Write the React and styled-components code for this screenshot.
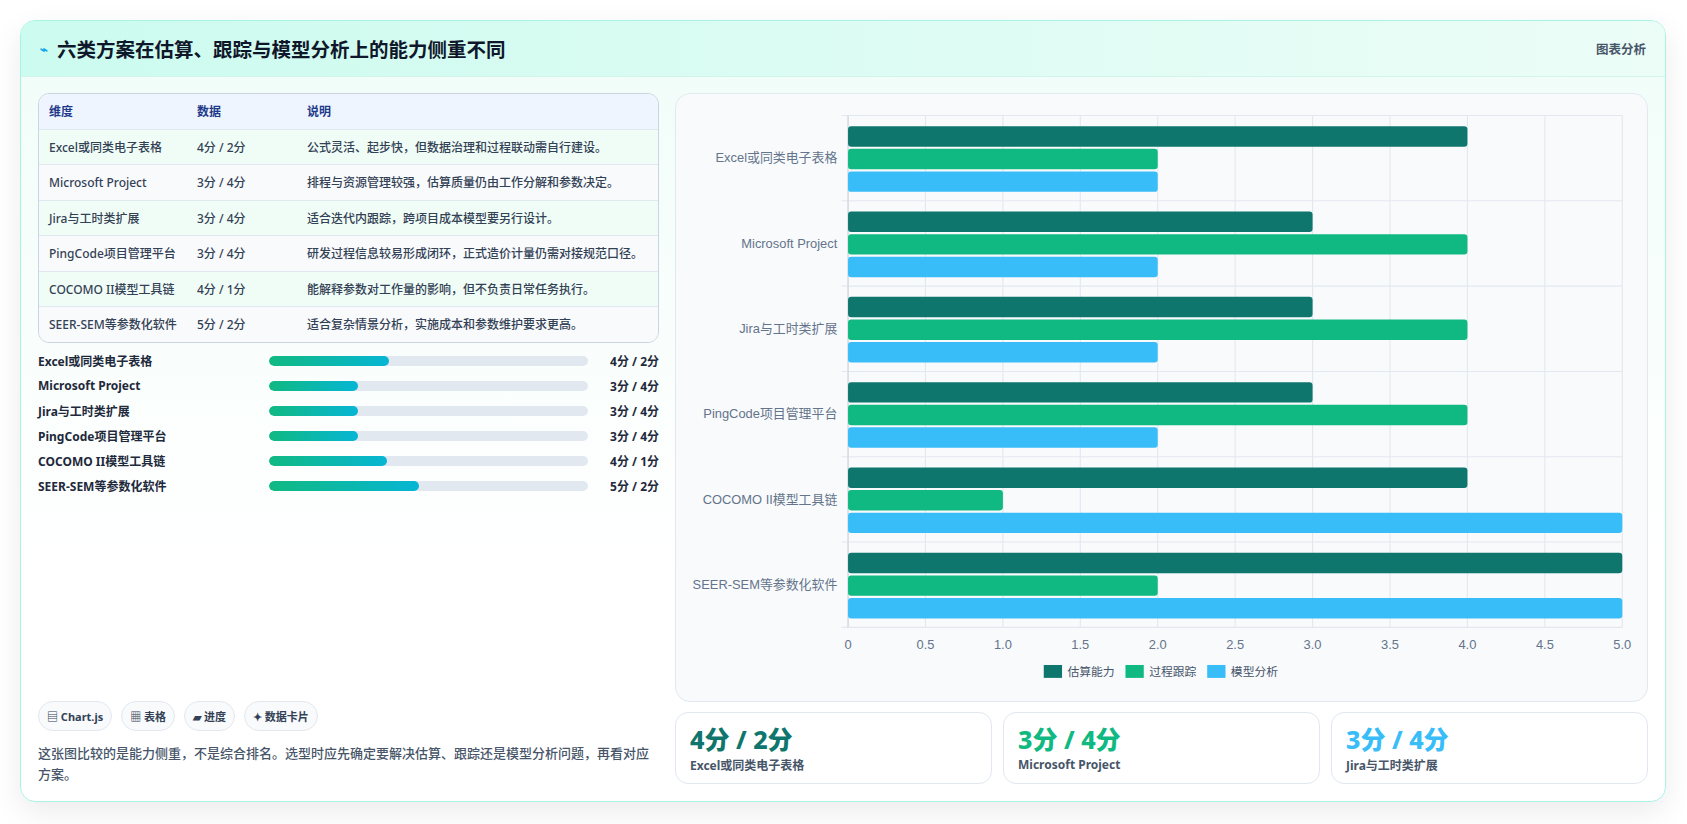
import React from "react";
import styled, { createGlobalStyle } from "styled-components";

const G = createGlobalStyle`
  body{margin:0;background:#fff;font-family:"Noto Sans","Noto Sans CJK SC",sans-serif;color:#0f172a;}
`;
const Page = styled.div`padding:20px 21px 22px 20px;`;
const Card = styled.div`
  height:782px;box-sizing:border-box;border:1px solid #a7f3e4;border-radius:15px;
  background:linear-gradient(180deg,#f0fdf8 0%,#ffffff 70%);box-shadow:0 10px 30px rgba(0,0,0,.08);
  display:flex;flex-direction:column;overflow:hidden;
`;
const Header = styled.div`
  height:55px;flex:none;display:flex;align-items:center;justify-content:space-between;padding:0 19px;
  background:linear-gradient(90deg,#ccfbef,#ecfdf7);border-bottom:1px solid #d1f5ea;
`;
const Title = styled.h1`margin:0;font-size:19.5px;font-weight:700;display:flex;gap:9px;align-items:center;`;
const Tag = styled.span`font-size:12.5px;color:#475569;font-weight:600;`;
const Body = styled.div`flex:1;display:grid;grid-template-columns:621px 1fr;gap:16px;padding:16px 17px 16px 17px;`;
const Left = styled.div`display:flex;flex-direction:column;`;
const Table = styled.div`border:1px solid #cbd5e1;border-radius:11px;overflow:hidden;`;
const Row = styled.div`
  display:grid;grid-template-columns:148px 110px 1fr;height:34.5px;align-items:center;padding-left:10px;
  font-size:12px;color:${p=>p.$h?"#1e3a8a":"#334155"};font-weight:${p=>p.$h?600:500};
  background:${p=>p.$h?"#eef5ff":p.$odd?"#f0fdf7":"#f8fafc"};border-top:${p=>p.$h?"none":"1px solid #e2e8f0"};
`;
const Bars = styled.div`display:flex;flex-direction:column;gap:7px;margin-top:9px;`;
const BarRow = styled.div`display:grid;grid-template-columns:231px 319px 1fr;align-items:center;height:18px;font-size:12px;font-weight:700;color:#1e293b;`;
const Track = styled.div`height:10px;border-radius:5px;background:#e2e8f0;overflow:hidden;`;
const Fill = styled.div`height:100%;border-radius:5px;background:linear-gradient(90deg,#10b981,#06b6d4);`;
const Val = styled.span`text-align:right;`;
const Spacer = styled.div`flex:1;`;
const Chips = styled.div`display:flex;gap:9px;`;
const Chip = styled.span`font-size:11px;font-weight:700;color:#334155;border:1px solid #e2e8f0;background:#f8fafc;border-radius:15px;padding:6px 8px;`;
const Note = styled.p`margin:12px 0 0;font-size:13px;line-height:21px;color:#475569;font-weight:500;`;
const Right = styled.div`display:flex;flex-direction:column;gap:10px;`;
const ChartBox = styled.div`height:607px;border:1px solid #e2e8f0;border-radius:15px;background:#f8fafc;overflow:hidden;`;
const Stats = styled.div`display:grid;grid-template-columns:repeat(3,1fr);gap:11px;`;
const Stat = styled.div`height:72px;box-sizing:border-box;border:1px solid #e2e8f0;border-radius:13px;background:#fff;padding:9px 14px;`;
const Big = styled.div`font-size:25px;font-weight:800;color:${p=>p.$c};line-height:34px;`;
const Small = styled.div`font-size:12px;font-weight:700;color:#475569;`;

const data=[
 ["Excel或同类电子表格","4分 / 2分","公式灵活、起步快，但数据治理和过程联动需自行建设。",[4,2,2],37.5],
 ["Microsoft Project","3分 / 4分","排程与资源管理较强，估算质量仍由工作分解和参数决定。",[3,4,2],28],
 ["Jira与工时类扩展","3分 / 4分","适合迭代内跟踪，跨项目成本模型要另行设计。",[3,4,2],28],
 ["PingCode项目管理平台","3分 / 4分","研发过程信息较易形成闭环，正式造价计量仍需对接规范口径。",[3,4,2],28],
 ["COCOMO II模型工具链","4分 / 1分","能解释参数对工作量的影响，但不负责日常任务执行。",[4,1,5],37],
 ["SEER-SEM等参数化软件","5分 / 2分","适合复杂情景分析，实施成本和参数维护要求更高。",[5,2,5],47],
];
const cols=["#0f766e","#10b981","#38bdf8"];

function Chart(){
  const x0=160,x1=880,y0=20,y1=496,gh=(y1-y0)/6;
  const sx=v=>x0+(v/5)*(x1-x0);
  return (
    <svg width="100%" viewBox="0 0 903 564" style={{display:"block"}}>
      {Array.from({length:11},(_,i)=>i*0.5).map(v=>(
        <g key={v}>
          <line x1={sx(v)} x2={sx(v)} y1={y0} y2={y1} stroke="#e2e8f0"/>
          <text x={sx(v)} y={y1+20} fontSize="12" fill="#64748b" textAnchor="middle" fontFamily="Liberation Sans">{v===0?"0":v.toFixed(1)}</text>
        </g>
      ))}
      {Array.from({length:7},(_,i)=><line key={i} x1={x0-6} x2={x1} y1={y0+i*gh} y2={y0+i*gh} stroke="#e2e8f0"/>)}
      <line x1={x0} x2={x0} y1={y0} y2={y1} stroke="#cbd5e1"/>
      {data.map((d,i)=>{
        const gy=y0+i*gh;
        return <g key={i}>
          <text x={x0-10} y={gy+gh/2+4} fontSize="12" fill="#64748b" textAnchor="end" fontFamily="Liberation Sans, Noto Sans CJK SC">{d[0]}</text>
          {d[3].map((v,k)=><rect key={k} x={x0} y={gy+10+k*21} width={sx(v)-x0} height={19} rx="3" fill={cols[k]}/>)}
        </g>;
      })}
      {["估算能力","过程跟踪","模型分析"].map((t,k)=>(
        <g key={t} transform={`translate(${342+k*76},531)`}>
          <rect width="17" height="12" fill={cols[k]}/>
          <text x="22" y="10" fontSize="11" fill="#475569" fontFamily="Noto Sans CJK SC">{t}</text>
        </g>
      ))}
    </svg>
  );
}

export default function App(){
  return <Page><G/><Card>
    <Header><Title><span style={{color:"#0ea5e9",fontSize:13}}>⌁</span>六类方案在估算、跟踪与模型分析上的能力侧重不同</Title><Tag>图表分析</Tag></Header>
    <Body>
      <Left>
        <Table>
          <Row $h><span>维度</span><span>数据</span><span>说明</span></Row>
          {data.map((d,i)=><Row key={i} $odd={i%2===0}><span>{d[0]}</span><span>{d[1]}</span><span>{d[2]}</span></Row>)}
        </Table>
        <Bars>
          {data.map((d,i)=><BarRow key={i}><span>{d[0]}</span><Track><Fill style={{width:d[4]+"%"}}/></Track><Val>{d[1]}</Val></BarRow>)}
        </Bars>
        <Spacer/>
        <Chips><Chip>▤ Chart.js</Chip><Chip>▦ 表格</Chip><Chip>▰ 进度</Chip><Chip>✦ 数据卡片</Chip></Chips>
        <Note>这张图比较的是能力侧重，不是综合排名。选型时应先确定要解决估算、跟踪还是模型分析问题，再看对应方案。</Note>
      </Left>
      <Right>
        <ChartBox><Chart/></ChartBox>
        <Stats>
          <Stat><Big $c="#0f766e">4分 / 2分</Big><Small>Excel或同类电子表格</Small></Stat>
          <Stat><Big $c="#10b981">3分 / 4分</Big><Small>Microsoft Project</Small></Stat>
          <Stat><Big $c="#38bdf8">3分 / 4分</Big><Small>Jira与工时类扩展</Small></Stat>
        </Stats>
      </Right>
    </Body>
  </Card></Page>;
}
